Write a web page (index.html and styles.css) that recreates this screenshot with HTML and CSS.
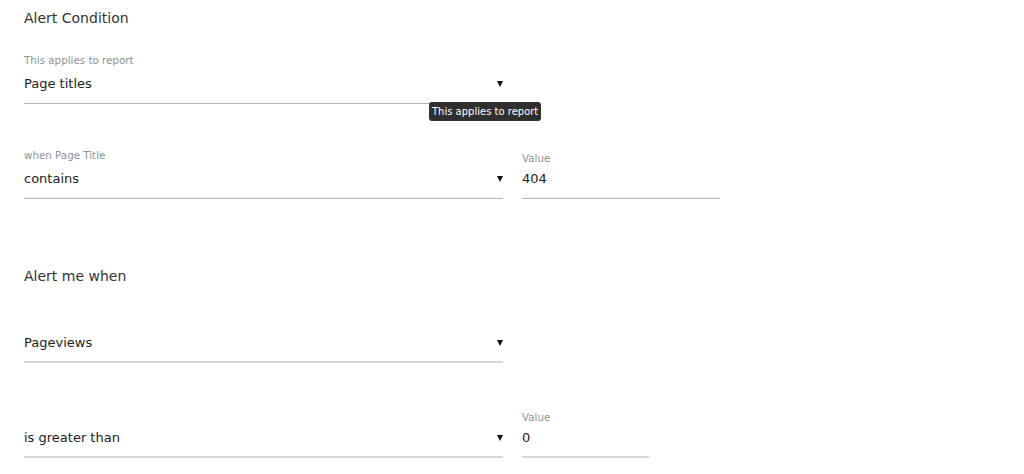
FILE: index.html
```html
<!DOCTYPE html>
<html>
<head>
<meta charset="utf-8">
<link rel="stylesheet" href="styles.css">
</head>
<body>
<div class="page">
  <h2 class="heading">Alert Condition</h2>

  <div class="row row-first">
    <div class="field select">
      <div class="label">This applies to report</div>
      <div class="control">
        <span class="value">Page titles</span>
        <span class="caret"></span>
      </div>
      <div class="tooltip">This applies to report</div>
    </div>
  </div>

  <div class="row row-second">
    <div class="field select">
      <div class="label">when Page Title</div>
      <div class="control">
        <span class="value">contains</span>
        <span class="caret"></span>
      </div>
    </div>
    <div class="field input wide">
      <div class="label small-gap">Value</div>
      <div class="control">
        <span class="value">404</span>
      </div>
    </div>
  </div>

  <h2 class="heading heading-second">Alert me when</h2>

  <div class="row row-third">
    <div class="field select light">
      <div class="control">
        <span class="value">Pageviews</span>
        <span class="caret"></span>
      </div>
    </div>
  </div>

  <div class="row row-fourth">
    <div class="field select light">
      <div class="control">
        <span class="value">is greater than</span>
        <span class="caret"></span>
      </div>
    </div>
    <div class="field input narrow light">
      <div class="label small-gap">Value</div>
      <div class="control">
        <span class="value">0</span>
      </div>
    </div>
  </div>
</div>
</body>
</html>
```

FILE: styles.css
```css
* { box-sizing: border-box; }
html, body {
  margin: 0;
  padding: 0;
  background: #fff;
}
body {
  font-family: "DejaVu Sans", "Liberation Sans", sans-serif;
  color: #222;
}
.page {
  padding: 9px 0 0 24px;
}
.heading {
  margin: 0;
  font-size: 14px;
  font-weight: normal;
  line-height: 18px;
  color: #333;
}
.heading-second {
  margin-top: 68px;
}
.row {
  display: flex;
  align-items: flex-end;
  gap: 19px;
}
.row-first { margin-top: 26px; }
.row-second { margin-top: 44px; }
.row-third { margin-top: 48px; }
.row-fourth { margin-top: 47px; }

.field {
  position: relative;
  border-bottom: 1px solid #b4b4b4;
  padding-bottom: 9px;
}
.field.light {
  border-bottom: 2px solid #d6d6d6;
  padding-bottom: 8px;
}
.select { width: 479px; }
.input.wide { width: 198px; }
.input.narrow { width: 127px; }

.label {
  font-size: 10.3px;
  line-height: 14px;
  color: #8c929a;
  margin-bottom: 7px;
}
.label.small-gap { margin-bottom: 4px; }

.control {
  display: flex;
  align-items: center;
  justify-content: space-between;
  height: 20px;
}
.value {
  font-size: 13px;
  line-height: 20px;
  color: #222;
}
.caret {
  width: 0;
  height: 0;
  border-left: 3px solid transparent;
  border-right: 3px solid transparent;
  border-top: 6px solid #111;
  margin-right: 0;
}
.tooltip {
  position: absolute;
  left: 405px;
  top: 49px;
  background: #2f2f2f;
  color: #fff;
  font-size: 10px;
  line-height: 19px;
  padding: 0 3px;
  border-radius: 3px;
  white-space: nowrap;
}
```
